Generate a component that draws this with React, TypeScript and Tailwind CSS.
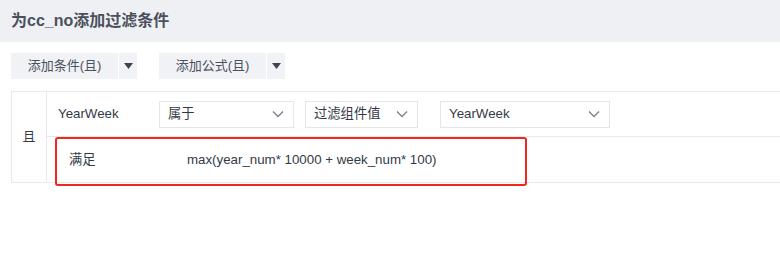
import React from 'react';

const font = { fontFamily: '"Liberation Sans", "Noto Sans CJK SC", sans-serif' };

const Caret = () => (
  <svg width="9" height="6" viewBox="0 0 9 6" className="fill-[#3d4350]">
    <path d="M0 0h9L4.5 6z" />
  </svg>
);

const Chevron = () => (
  <svg width="12" height="8" viewBox="0 0 12 8" fill="none" className="stroke-[#7a7f8a]">
    <path d="M1 1.5l5 5 5-5" strokeWidth="1.3" />
  </svg>
);

const SplitButton: React.FC<{ label: string }> = ({ label }) => (
  <div className="flex h-[26px]">
    <button className="w-[107px] bg-[#f0f2f6] text-[13px] text-[#4a505c]">{label}</button>
    <button className="ml-px flex w-[18px] items-center justify-center bg-[#f0f2f6]">
      <Caret />
    </button>
  </div>
);

const Select: React.FC<{ value: string; width: string }> = ({ value, width }) => (
  <div className={`flex h-[27px] items-center justify-between border border-[#e4e6ea] bg-white pl-2 pr-[9px] text-[13.3px] text-[#333a45] ${width}`}>
    <span>{value}</span>
    <Chevron />
  </div>
);

export default function App() {
  return (
    <div className="h-[274px] w-[780px] overflow-hidden bg-white" style={font}>
      <div className="flex h-[42px] items-center bg-[#eef0f4] pl-[11px] text-[16px] font-bold text-[#4b505c]">
        为cc_no添加过滤条件
      </div>

      <div className="mt-[11px] flex gap-[22px] pl-[11px]">
        <SplitButton label="添加条件(且)" />
        <SplitButton label="添加公式(且)" />
      </div>

      <div className="ml-[11px] mt-[12px] flex border-y border-l border-[#e8e9ec]">
        <div className="flex w-[35px] items-center justify-center border-r border-[#e8e9ec] text-[13px] text-[#333a45]">
          且
        </div>
        <div className="flex-1">
          <div className="flex h-[45px] items-center border-b border-[#e8e9ec] pl-[11px] text-[13.3px] text-[#333a45]">
            <span className="w-[101px]">YearWeek</span>
            <Select value="属于" width="w-[135px]" />
            <div className="w-[11px]" />
            <Select value="过滤组件值" width="w-[113px]" />
            <div className="w-[22px]" />
            <Select value="YearWeek" width="w-[170px]" />
          </div>
          <div className="relative flex h-[45px] items-center text-[13.3px] text-[#333a45]">
            <div className="absolute left-[8px] top-0 h-[49px] w-[472px] rounded-[3px] border-[2.5px] border-[#f0271f]" />
            <span className="ml-[22px] w-[118px]">满足</span>
            <span>max(year_num* 10000 + week_num* 100)</span>
          </div>
        </div>
      </div>
    </div>
  );
}
